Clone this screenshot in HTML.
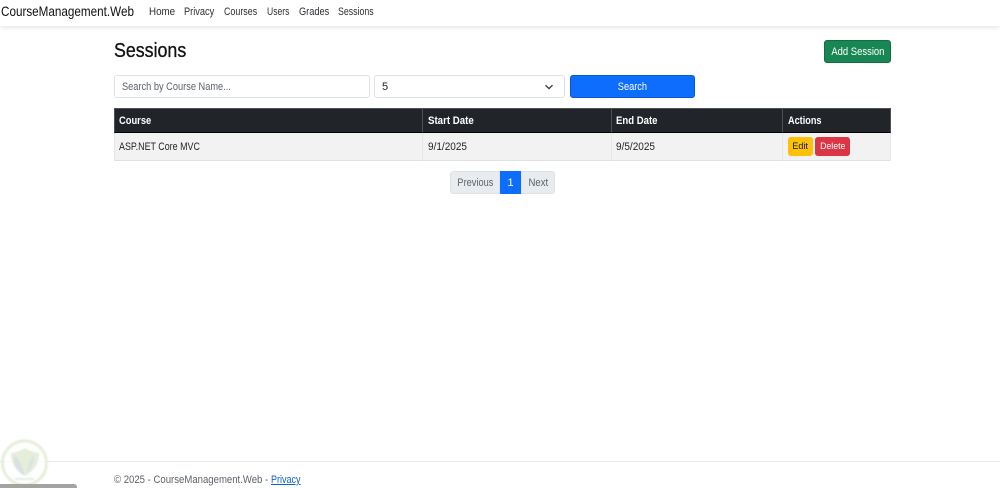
<!DOCTYPE html>
<html lang="en"><head><meta charset="utf-8"><title>Sessions</title>
<style>
html,body{margin:0;padding:0;background:#fff}
body{width:1000px;height:488px;position:relative;overflow:hidden;font-family:"Liberation Sans",sans-serif;color:#212529}
#p{position:absolute;left:0;top:0;width:1000px;height:488px;filter:blur(.25px)}
.a{position:absolute;white-space:nowrap}
s{display:inline-block;text-decoration:none;white-space:nowrap;transform-origin:0 50%}
.c s{transform-origin:50% 50%}
nav{position:absolute;left:0;top:0;width:1000px;height:26px;background:#fff;box-shadow:0 1px 5px rgba(0,0,0,.13)}
nav a{position:absolute;top:6px;font-size:11px;line-height:13px;color:#2b2f33;text-decoration:none}
.brand{position:absolute;left:1px;top:2px;font-size:14px;line-height:19px;color:#111}
h1{position:absolute;left:114px;top:39px;margin:0;font-size:20px;line-height:24px;font-weight:500;color:#111;-webkit-text-stroke:.3px #111}
.btn{position:absolute;box-sizing:border-box;text-align:center;border-radius:3px;font-size:11px}
.field{position:absolute;box-sizing:border-box;top:75px;height:23px;border:1px solid #dee2e6;border-radius:3px;background:#fff;font-size:11px;line-height:23px;padding-left:7px;color:#212529}
.th{position:absolute;top:108px;height:25px;box-sizing:border-box;background:#212529;border:1px solid #4d5154;border-bottom-color:#000;border-right:0;color:#fff;font-size:11px;font-weight:700;line-height:24px;padding-left:4px}
.td{position:absolute;top:133px;height:28px;box-sizing:border-box;background:#f2f2f2;border-bottom:1px solid #dee2e6;border-left:1px solid #e4e6e8;font-size:11px;line-height:28px;padding-left:4px;color:#212529}
.pg{position:absolute;top:171px;height:23px;box-sizing:border-box;background:#e9ecef;border:1px solid #dee2e6;font-size:11px;line-height:21px;text-align:center;color:#5c636a}
footer{position:absolute;left:0;top:461px;width:1000px;border-top:1px solid #e6e8ea}
</style></head><body><div id="p">
<nav>
<span class="brand"><s style="transform:scaleX(.835)">CourseManagement.Web</s></span>
<a href="#" style="left:149px"><s style="transform:scaleX(.89)">Home</s></a>
<a href="#" style="left:184px"><s style="transform:scaleX(.84)">Privacy</s></a>
<a href="#" style="left:224px"><s style="transform:scaleX(.81)">Courses</s></a>
<a href="#" style="left:267px"><s style="transform:scaleX(.78)">Users</s></a>
<a href="#" style="left:299px"><s style="transform:scaleX(.84)">Grades</s></a>
<a href="#" style="left:338px"><s style="transform:scaleX(.8)">Sessions</s></a>
</nav>
<h1><s style="transform:scaleX(.89)">Sessions</s></h1>
<div class="btn c" style="left:824px;top:40px;width:67px;height:23px;background:#198754;border:1px solid #146c43;color:#fff;line-height:23px"><s style="transform:scaleX(.86)">Add Session</s></div>
<div class="field" style="left:114px;width:256px;color:#5c636a"><s style="transform:scaleX(.84)">Search by Course Name...</s></div>
<div class="field" style="left:374px;width:191px">5
<svg class="a" style="left:169px;top:7px" width="10" height="8" viewBox="0 0 10 8"><path d="M1.5 2.2 5 5.6 8.500 2.200" fill="none" stroke="#343a40" stroke-width="1.300"/></svg></div>
<div class="btn c" style="left:570px;top:75px;width:125px;height:23px;background:#0d6efd;border:1px solid #0a58ca;color:#fff;line-height:23px"><s style="transform:scaleX(.84)">Search</s></div>

<div class="th" style="left:114px;width:308px"><s style="transform:scaleX(.85)">Course</s></div>
<div class="th" style="left:422px;width:189px;padding-left:5px"><s style="transform:scaleX(.88)">Start Date</s></div>
<div class="th" style="left:611px;width:171px"><s style="transform:scaleX(.87)">End Date</s></div>
<div class="th" style="left:782px;width:109px;padding-left:5px;border-right:1px solid #4d5154"><s style="transform:scaleX(.83)">Actions</s></div>
<div class="td" style="left:114px;width:308px"><s style="transform:scaleX(.81)">ASP.NET Core MVC</s></div>
<div class="td" style="left:422px;width:189px;padding-left:5px"><s style="transform:scaleX(.91)">9/1/2025</s></div>
<div class="td" style="left:611px;width:171px"><s style="transform:scaleX(.91)">9/5/2025</s></div>
<div class="td" style="left:782px;width:109px;border-right:1px solid #e4e6e8"></div>
<div class="btn c" style="left:788px;top:137px;width:25px;height:19px;background:#ffc107;color:#111;font-size:9.5px;line-height:20px"><s style="transform:scaleX(.95)">Edit</s></div>
<div class="btn c" style="left:815px;top:137px;width:35px;height:19px;background:#dc3545;color:#fff;font-size:9.5px;line-height:20px"><s style="transform:scaleX(.92)">Delete</s></div>

<div class="pg c" style="left:450px;width:50px;border-radius:3px 0 0 3px;line-height:22px"><s style="transform:scaleX(.84)">Previous</s></div>
<div class="pg" style="left:500px;width:21px;background:#0d6efd;border-color:#0d6efd;color:#fff;line-height:22px">1</div>
<div class="pg c" style="left:521px;width:34px;border-radius:0 3px 3px 0;line-height:22px"><s style="transform:scaleX(.87)">Next</s></div>

<footer></footer>
<div class="a" style="left:114px;top:473px;font-size:11px;line-height:14px;color:#5c636a"><s style="transform:scaleX(.87)">© 2025 - CourseManagement.Web -</s></div>
<a class="a" href="#" style="left:271px;top:473px;font-size:11px;line-height:14px;color:#0d5fd0"><s style="transform:scaleX(.82);text-decoration:underline">Privacy</s></a>

<svg class="a" style="left:0;top:438px;filter:blur(.7px)" width="52" height="50" viewBox="0 0 52 50">
<circle cx="24.500" cy="25" r="22" fill="#fff" fill-opacity=".75" stroke="#e6eedb" stroke-width="3"/>
<path d="M11 15 Q18 14 25 10 Q32 14 39 15 Q40 29 25 38 Q10 29 11 15Z" fill="#e6eedb"/>
<path d="M14 17 Q22 24 25 38 Q12 31 14 17Z" fill="#d6e1e4"/>
<path d="M34 17 Q36 26 27 35 Q27 24 34 17Z" fill="#dbe5e1"/>
<rect x="15" y="40" width="19" height="2" fill="#e8ebe6"/>
</svg>
<div class="a" style="left:0;top:484px;width:77px;height:4px;background:#a3a3a3;border-radius:0 3px 0 0"></div>
</div></body></html>
